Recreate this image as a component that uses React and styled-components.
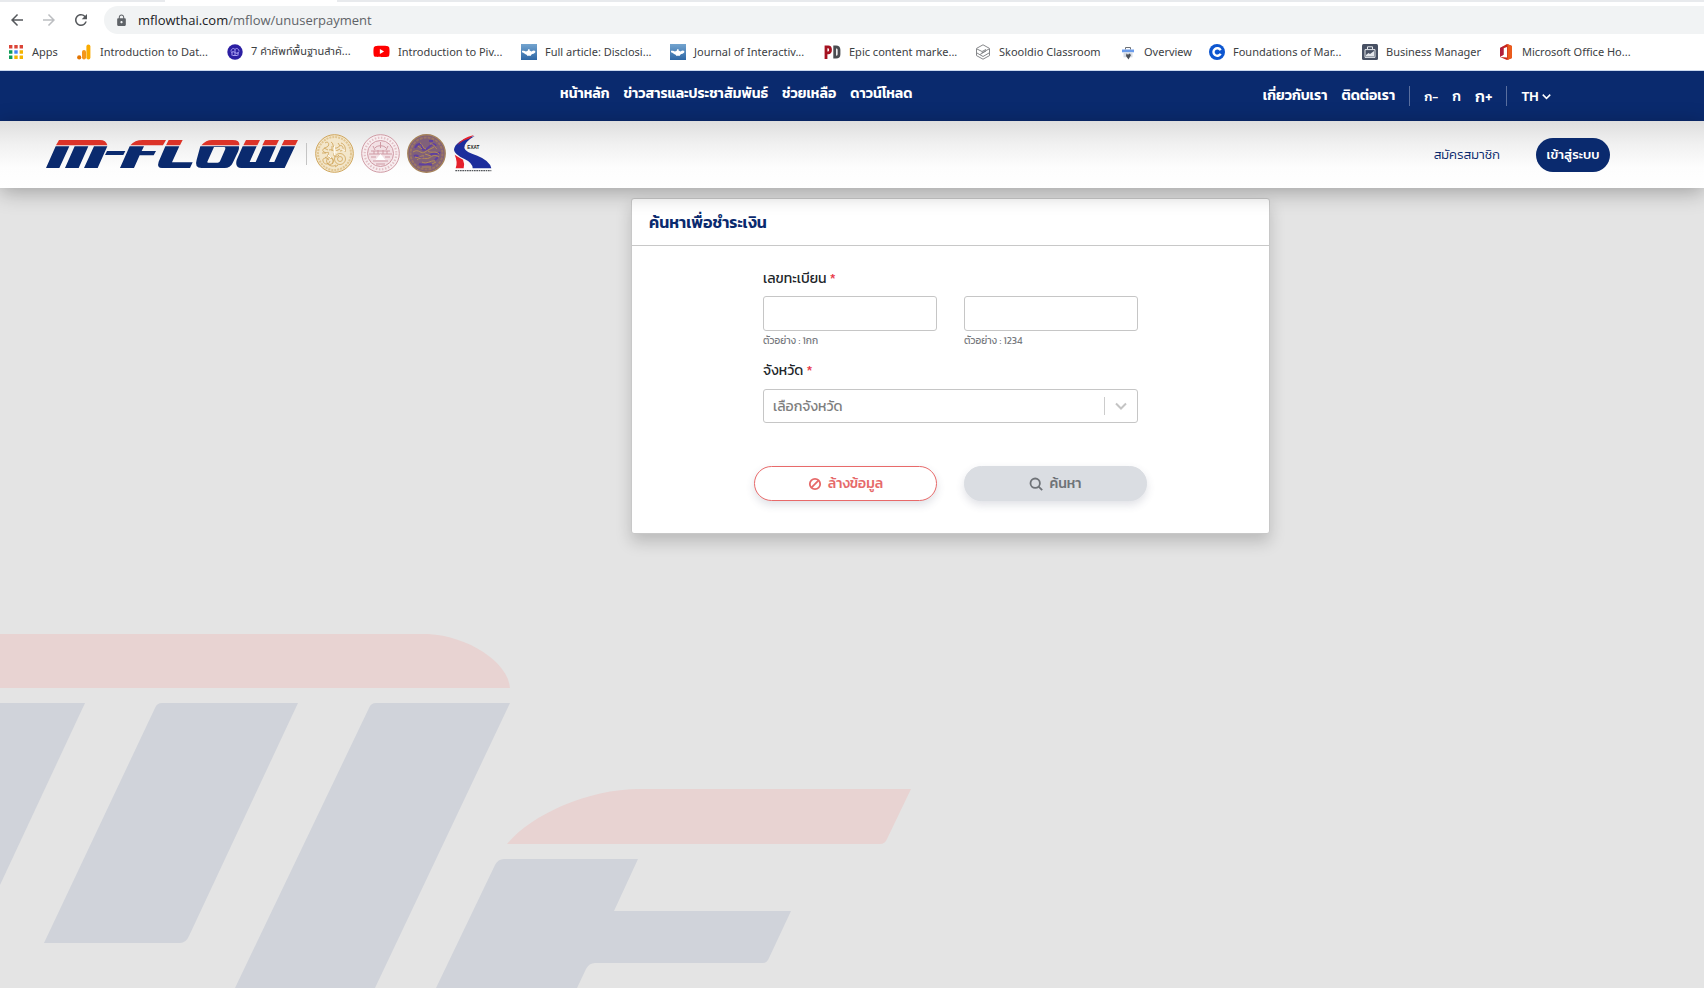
import React from "react"
import styled, { createGlobalStyle } from "styled-components"
import { MdArrowBack, MdArrowForward, MdRefresh, MdLock } from "react-icons/md"
import { FaYoutube } from "react-icons/fa"

const NAVY = "#0a2a6e"

const GlobalStyle = createGlobalStyle`
  * {
    box-sizing: border-box;
  }

  body {
    margin: 0;
    background: #e4e4e4;
    font-family: Kanit, "Noto Sans Thai", "Open Sans", sans-serif;
    color: #212529;
  }

  a {
    color: inherit;
    text-decoration: none;
  }

  button, input, select {
    font-family: inherit;
  }
`

const Page = styled.div`
  display: flex;
  flex-direction: column;
  min-height: 100vh;
`

/* browser bar */

const Chrome = styled.div`
  background: #fff;
  border-bottom: 1px solid #c9d8ee;
  font-family: "Open Sans", "Noto Sans Thai", sans-serif;
`

const TabStrip = styled.div`
  display: flex;
  height: 2px;
  background: #fff;
`

const TabEdge = styled.div`
  width: ${props => props.$width || "auto"};
  flex: ${props => (props.$width ? "none" : 1)};
  margin-right: ${props => (props.$width ? "172px" : 0)};
  background: #e8eaed;
`

const Toolbar = styled.div`
  display: flex;
  align-items: center;
  gap: 14px;
  padding: 4px 0 4px 8px;
`

const ToolButton = styled.button`
  display: flex;
  padding: 0;
  border: 0;
  background: none;
  font-size: 18px;
  color: ${props => (props.disabled ? "#bcbec1" : "#55585c")};
`

const Address = styled.div`
  display: flex;
  flex: 1;
  align-items: center;
  gap: 10px;
  height: 28px;
  padding-left: 11px;
  border-radius: 14px 0 0 14px;
  background: #f1f3f4;
  color: #5f6368;
`

const AddressText = styled.span`
  font-size: 13px;
  line-height: 28px;

  b {
    font-weight: 400;
    color: #202124;
  }
`

const Bookmarks = styled.nav`
  display: flex;
  height: 32px;
  padding-left: 8px;
`

const Bookmark = styled.a`
  display: flex;
  flex: none;
  align-items: center;
  gap: 8px;
  width: ${props => props.$width}px;
  height: 27px;
  font-family: "Noto Sans", "Noto Sans Thai", sans-serif;
  font-size: 11px;
  color: #3c4043;
  white-space: nowrap;

  svg {
    flex: none;
  }
`

/* site header */

const TopBar = styled.div`
  display: flex;
  justify-content: space-between;
  height: 50px;
  padding: 0 9% 0 560px;
  background: ${NAVY};
  color: #fff;
  font-size: 14px;
  font-weight: 600;
  line-height: 20px;
  white-space: nowrap;
`

const Menu = styled.nav`
  display: flex;
  gap: 14px;
  padding-top: 13px;
`

const Tools = styled.div`
  display: flex;
  align-items: center;
  gap: 14px;
`

const Separator = styled.span`
  width: 1px;
  height: ${props => props.$height || 20}px;
  background: ${props => props.$color || "#5a6f9f"};
`

const SizeButton = styled.button`
  padding: 0;
  border: 0;
  background: none;
  color: inherit;
  font-size: ${props => props.$size}px;
  font-weight: 500;
`

const LangButton = styled(SizeButton)`
  display: flex;
  align-items: center;
  gap: 3px;
`

const Header = styled.header`
  position: relative;
  z-index: 1;
  display: flex;
  align-items: center;
  justify-content: space-between;
  height: 67px;
  padding: 0 94px 0 46px;
  background: linear-gradient(#dedede, #f1f1f1 35%, #fdfdfd 70%, #fff);
  box-shadow: 0 4px 20px rgba(0, 0, 0, 0.3);
`

const Brand = styled.a`
  display: flex;
  align-items: center;
  gap: 8px;
  padding-bottom: 2px;
`

const Seals = styled.span`
  display: flex;
  gap: 7px;
`

const Account = styled.div`
  display: flex;
  align-items: center;
  gap: 36px;
  font-size: 13px;
  font-weight: 300;
  color: ${NAVY};
`

const LoginButton = styled.button`
  width: 74px;
  height: 34px;
  padding: 0;
  border: 0;
  border-radius: 17px;
  background: ${NAVY};
  color: #fff;
  font-size: 13px;
  font-weight: 500;
`

/* search form */

const Main = styled.main`
  position: relative;
  display: flex;
  flex: 1;
  align-items: flex-start;
  justify-content: center;
  padding: 10px 0 40px 197px;
  overflow: hidden;
`

const Watermark = styled.svg`
  position: absolute;
  left: 0;
  bottom: 0;
`

const Card = styled.form`
  position: relative;
  flex: 0 1 639px;
  border: 1px solid #c8c8c8;
  border-radius: 3px;
  background: #fff;
  box-shadow: 0 8px 16px rgba(0, 0, 0, 0.18);
`

const CardTitle = styled.h1`
  margin: 0;
  padding: 0 17px;
  border-bottom: 1px solid #c8c8c8;
  color: ${NAVY};
  font-size: 16px;
  font-weight: 600;
  line-height: 46px;
`

const Fields = styled.div`
  display: grid;
  grid-template-columns: 1fr 1fr;
  column-gap: 27px;
  padding: 21px 131px 0;
`

const Label = styled.label`
  grid-column: 1 / -1;
  font-size: 14px;
  line-height: 24px;

  span {
    color: #e8394a;
  }
`

const TextInput = styled.input`
  width: 100%;
  height: 35px;
  margin-top: 5px;
  padding: 0 10px;
  border: 1px solid #c6c6c6;
  border-radius: 3px;
  background: #fff;
  font-size: 14px;
`

const Hint = styled.small`
  height: 28px;
  font-size: 10px;
  line-height: 20px;
  color: #76797e;
`

const SelectBox = styled.div`
  display: grid;
  grid-column: 1 / -1;
  align-items: center;
  height: 34px;
  margin-top: 6px;
  border: 1px solid #c6c6c6;
  border-radius: 3px;

  > * {
    grid-area: 1 / 1;
  }
`

const Select = styled.select`
  width: 100%;
  height: 32px;
  padding: 0 44px 0 9px;
  border: 0;
  background: none;
  appearance: none;
  color: #7d7d7d;
  font-size: 14px;
`

const Indicator = styled.span`
  display: flex;
  align-items: center;
  justify-self: end;
  gap: 10px;
  padding-right: 10px;
  pointer-events: none;
`

const Actions = styled.div`
  display: grid;
  grid-template-columns: 1fr 1fr;
  gap: 27px;
  padding: 43px 122px 32px;
`

const ActionButton = styled.button`
  display: flex;
  align-items: center;
  justify-content: center;
  gap: 6px;
  height: 35px;
  border: 1px solid ${props => (props.$outline ? "#e86a6a" : "#dadde2")};
  border-radius: 18px;
  background: ${props => (props.$outline ? "#fff" : "#dadde2")};
  color: ${props => (props.$outline ? "#e66a6a" : "#6f7378")};
  box-shadow: 0 4px 8px rgba(60, 70, 100, 0.16);
  font-size: 14px;
  font-weight: 500;
`

const Chevron = ({ size, color, width }) => (
  <svg width={size} height={size} viewBox="0 0 12 12" fill="none" stroke={color} strokeWidth={width}>
    <path d="M1 3.5l5 5 5-5" />
  </svg>
)

const icons = {
  apps: (
    <svg width="16" height="16" viewBox="0 0 16 16">
      <path fill="#db4437" d="M1 1h3.4v3.4H1zM6.3 1h3.4v3.4H6.3zM11.6 1H15v3.4h-3.4z" />
      <path fill="#0f9d58" d="M1 6.3h3.4v3.4H1zM1 11.6h3.4V15H1z" />
      <path fill="#4285f4" d="M6.3 6.3h3.4v3.4H6.3z" />
      <path fill="#f4b400" d="M11.6 6.3H15v3.4h-3.4zM6.3 11.6h3.4V15H6.3zM11.6 11.6H15V15h-3.4z" />
    </svg>
  ),
  analytics: (
    <svg width="16" height="16" viewBox="0 0 16 16">
      <rect x="10.4" y="0.5" width="4" height="15" rx="2" fill="#f9ab00" />
      <rect x="6" y="6" width="4" height="9.5" rx="2" fill="#f4971c" />
      <circle cx="3.2" cy="13.4" r="2.1" fill="#e37400" />
    </svg>
  ),
  words: (
    <svg width="16" height="16" viewBox="0 0 16 16">
      <circle cx="8" cy="8" r="7.7" fill="#2c1fa3" />
      <path
        fill="none"
        stroke="#a79df0"
        d="M4 7.5c0-3 3-4 4-2 1-2 4-1 4 2M4 8.5c1-1 3-1 4 0s3 1 4 0M5 8v3.5M8 5.5V12M11 8v3.5M5.5 11.5h5"
      />
    </svg>
  ),
  youtube: <FaYoutube size={17} color="#f00" />,
  lamp: (
    <svg width="16" height="16" viewBox="0 0 16 16">
      <defs>
        <linearGradient id="lamp" x2="0" y2="1">
          <stop stopColor="#73a4cf" />
          <stop offset="1" stopColor="#2e67a5" />
        </linearGradient>
      </defs>
      <path fill="url(#lamp)" d="M0 0h16v16H0z" />
      <path
        fill="#fff"
        d="M1 6.8c2-.4 3 .4 4 .6l2-.8V5.200h1.6v1.400l2 .8c1-.9 3-1.400 3.700-.2.6 1.600-1.300 2.400-3 2.700L10 11v.8H6V11c-2.200-.6-3-2.400-5-2.700z"
      />
    </svg>
  ),
  pd: (
    <svg width="17" height="16" viewBox="0 0 17 16" fill="none" strokeWidth="2.8">
      <path stroke="#a51220" d="M2 15V2.8h2.2q2.3 0 2.3 3t-2.3 3H2" />
      <path stroke="#4a4c50" d="M10.7 2.8v10.4H12q3 0 3-3V5.800q0-3-3-3z" />
    </svg>
  ),
  skooldio: (
    <svg width="16" height="16" viewBox="0 0 16 16" fill="none" stroke="#85878a">
      <path d="M8 .8l6.500 3.600v7.200L8 15.200l-6.500-3.600V4.400z" />
      <path d="M2 9l6 3.500L14 9M5 10.500l6-3.500M6.500 9L14 5M2 5l5 2.500L11 5.500" />
    </svg>
  ),
  overview: (
    <svg width="16" height="16" viewBox="0 0 16 16">
      <path fill="none" stroke="#6c7075" d="M5.5 5.5v-2h5v2" />
      <path fill="#6a9bea" d="M2 5.500h12v2.800H2z" />
      <path fill="#d5dbe4" d="M3.500 8.300h9v5h-9z" />
      <path fill="#4c5158" d="M6.500 9.500l1.500 1.200 1.500-1.200 1.500 1.500-2.500 4.500L6 12z" />
    </svg>
  ),
  coursera: (
    <svg width="16" height="16" viewBox="0 0 16 16">
      <circle cx="8" cy="8" r="8" fill="#0d56d0" />
      <path fill="none" stroke="#fff" strokeWidth="2.4" d="M11.6 6.2A3.8 3.8 0 1 0 11.6 9.8" />
    </svg>
  ),
  business: (
    <svg width="16" height="16" viewBox="0 0 16 16">
      <rect width="16" height="16" rx="1.5" fill="#475063" />
      <path fill="none" stroke="#e4e7ec" d="M5.5 5V2.800h5V5M3 5.600h10v7.800H3z" />
      <path fill="#e4e7ec" d="M4 12.500V11l2.500-2 1.500 1 4-3v5.500z" />
    </svg>
  ),
  office: (
    <svg width="16" height="16" viewBox="0 0 16 16">
      <path fill="#c8261c" d="M2 4l7-4 5 2v12l-5 2-7-3 7 .6V3L5.500 4.200v6.600L2 12.800z" />
      <path fill="#ea5b1c" d="M9.500 0L14 2v12l-4.500 2z" />
      <path fill="#b01e3c" d="M2 4l3.500-1.700v8.500L2 12.800z" />
    </svg>
  ),
}

const bookmarks = [
  { icon: "apps", text: "Apps", width: 68 },
  { icon: "analytics", text: "Introduction to Dat...", width: 151 },
  { icon: "words", text: "7 คำศัพท์พื้นฐานสำคั...", width: 146 },
  { icon: "youtube", text: "Introduction to Piv...", width: 148 },
  { icon: "lamp", text: "Full article: Disclosi...", width: 149 },
  { icon: "lamp", text: "Journal of Interactiv...", width: 154 },
  { icon: "pd", text: "Epic content marke...", width: 151 },
  { icon: "skooldio", text: "Skooldio Classroom", width: 145 },
  { icon: "overview", text: "Overview", width: 89 },
  { icon: "coursera", text: "Foundations of Mar...", width: 153 },
  { icon: "business", text: "Business Manager", width: 136 },
  { icon: "office", text: "Microsoft Office Ho...", width: 140 },
]

const MFlowLogo = () => (
  <svg width="252" height="28" viewBox="18 45 756 84" role="img" aria-label="M-Flow">
    <g fill="#dc3328">
      <path d="M57 45H180Q198 45 202 61H48z" />
      <path d="M271 61Q284 45 308 45H378L369 61z" />
      <path d="M386 45H428L420 61H378z" />
      <path d="M484 61Q498 45 516 45H578Q600 45 598 61z" />
      <path d="M618 45H660L652 61H610zM675 45H717L709 61H667zM733 45H774L766 61H725z" />
    </g>
    <g fill={NAVY}>
      <path d="M47 64H88L58 129H18zM104 64H145L116 129H75zM162 64H202L173 129H132z" />
      <path d="M201 78H256L250 90H195z" />
      <path d="M269 64H312L305 78H348L341 91H299L282 129H240z" />
      <path d="M376 64H418L396 112H458L450 129H366Q350 129 356 110z" />
      <path
        fillRule="evenodd"
        d="M481 64H597Q598 72 594 80L578 114Q571 129 554 129H485Q462 129 470 104zM522 66L502 110Q501 113 505 113H533Q538 113 540 109L556 72Q557 66 553 66z"
      />
      <path d="M608 64H650L629 111H647L668 64H708L687 111H703L724 64H765L734 129H604Q584 129 590 105z" />
    </g>
  </svg>
)

const GoldSeal = () => (
  <svg width="39" height="39" viewBox="0 0 39 39" fill="none" stroke="#cfa55a">
    <circle cx="19.5" cy="19.5" r="18.8" fill="#f3e6ca" />
    <circle cx="19.5" cy="19.5" r="16.5" strokeWidth="2" strokeDasharray="2 1" opacity=".5" />
    <path
      opacity=".85"
      d="M10 9c4-3 5 3 2 4s-6 3-3 5 6-2 4 3-6 2-5 6 6 4 7 0M16 8c3 1 1 5 4 6s5-4 7-2 1 5-2 5M14 16c3-1 6 1 5 4s3 4 5 1M15 24c3 0 4 3 2 6M26 9c4 1 5 6 4 9M12 29c2 3 6 4 9 2M17 12v7M9 14l4 2M7 19h4M23 9l2 3M21 17l4-2M20 33l3-2M10 23l4 3"
    />
    <circle cx="25" cy="25" r="5.5" opacity=".8" />
    <circle cx="25" cy="25" r="2.5" opacity=".8" />
    <circle cx="15" cy="27" r="3.5" opacity=".8" />
    <path stroke="#fffaf0" d="M19.5 12v9M16 18h6M13 21l3 3M27 15l3 2" />
  </svg>
)

const RoseSeal = () => (
  <svg width="39" height="39" viewBox="0 0 39 39" fill="none" stroke="#cf9aa4">
    <circle cx="19.5" cy="19.5" r="18.8" fill="#f8eef0" />
    <circle cx="19.5" cy="19.5" r="15.8" strokeWidth="2.2" strokeDasharray="1.5 1.6" opacity=".55" />
    <circle cx="19.5" cy="19.5" r="13" fill="#f2e0e4" />
    <path d="M19.5 8v6M12 12l2 4M27 12l-2 4M10 17h19M8 20h23M10 23h5M24 23h5M14 14c2-3 9-3 11 0M13 17v3M17 16v4M22 16v4M26 17v3M12 27h15M15 30h9" />
    <path fill="#fff" stroke="none" d="M19.5 20l5 6h-10z" />
  </svg>
)

const PurpleSeal = () => (
  <svg width="39" height="39" viewBox="0 0 39 39" fill="none">
    <circle cx="19.5" cy="19.5" r="18.7" fill="#80607a" stroke="#a5825a" strokeWidth="1.4" />
    <circle cx="19.5" cy="19.5" r="16" stroke="#9c7664" strokeWidth="2" strokeDasharray="3 1" />
    <path
      stroke="#5f40a0"
      strokeWidth="2"
      d="M8 14c3-6 8-4 7-1s3 4 6 1 6-6 8-2M7 22c4-2 5 3 9 2M23 21c4-3 8 1 10-3M12 30c4 2 8-2 13 1M28 26l3-3M22 7h4"
    />
    <path
      stroke="#b58d55"
      d="M6 18c6-4 8 3 12 0s6-3 9-5M10 26c4-4 8 0 12-2s5-4 10-1M13 9c3 1 2 5 6 6M23 10c4-1 5 4 7 5M15 28c5 3 8-2 13-1M8 23c3 2 6-2 9-1M21 17c4 3 7-1 11 3M15 33h9M11 12l4 3M18 20l6 2M25 30l4-2"
    />
  </svg>
)

const ExatLogo = () => (
  <svg width="40" height="39" viewBox="-3 0 120 117">
    <path fill="#1c2d9c" d="M62 6Q2 20 0 48Q2 62 30 74Q56 86 56 103H112Q108 80 70 65Q34 54 31 42Q30 24 62 6z" />
    <path fill="#e5202b" d="M60 3Q22 12 10 34Q26 18 44 15zM2 62Q14 70 27 77Q33 90 29 103H5Q12 84 2 62z" />
    <text x="40" y="44" fontSize="14" fontWeight="700" fontFamily="Liberation Sans" fill="#222">EXAT</text>
    <path stroke="#55585c" strokeWidth="4" strokeDasharray="5 2" d="M4 110H112" />
  </svg>
)

const BackgroundMark = () => (
  <Watermark width="940" height="368" viewBox="0 0 940 368" aria-hidden="true">
    <g fill="#e8d3d2">
      <path d="M0 14H428C468 16 508 42 510 68H0z" />
      <path d="M507 224C530 196 586 169 640 169H911L887 219Q885 224 880 224z" />
    </g>
    <g fill="#d0d3da">
      <path d="M0 83H85L0 265z" />
      <path d="M162 83H298L189 316Q186 323 180 323H44L155 88Q157 83 162 83z" />
      <path d="M376 83H510L375 368H235L369 88Q371 83 376 83z" />
      <path d="M504 239H638L614 291H791L769 338Q767 343 763 343H595Q589 343 586 349L577 368H436L495 245Q498 239 504 239z" />
    </g>
  </Watermark>
)

const BrowserBar = () => (
  <Chrome>
    <TabStrip>
      <TabEdge $width="165px" />
      <TabEdge />
    </TabStrip>
    <Toolbar>
      <ToolButton aria-label="Back"><MdArrowBack /></ToolButton>
      <ToolButton aria-label="Forward" disabled><MdArrowForward /></ToolButton>
      <ToolButton aria-label="Reload"><MdRefresh /></ToolButton>
      <Address>
        <MdLock size={13} />
        <AddressText><b>mflowthai.com</b>/mflow/unuserpayment</AddressText>
      </Address>
    </Toolbar>
    <Bookmarks aria-label="Bookmarks">
      {bookmarks.map(item => (
        <Bookmark href="#" key={item.text} $width={item.width}>
          {icons[item.icon]}
          {item.text}
        </Bookmark>
      ))}
    </Bookmarks>
  </Chrome>
)

const SiteHeader = () => (
  <>
    <TopBar>
      <Menu>
        <a href="#">หน้าหลัก</a>
        <a href="#">ข่าวสารและประชาสัมพันธ์</a>
        <a href="#">ช่วยเหลือ</a>
        <a href="#">ดาวน์โหลด</a>
      </Menu>
      <Tools>
        <a href="#">เกี่ยวกับเรา</a>
        <a href="#">ติดต่อเรา</a>
        <Separator />
        <SizeButton $size={13}>ก-</SizeButton>
        <SizeButton $size={14}>ก</SizeButton>
        <SizeButton $size={16}>ก+</SizeButton>
        <Separator />
        <LangButton $size={14}>TH <Chevron size={9} color="#fff" width={2} /></LangButton>
      </Tools>
    </TopBar>
    <Header>
      <Brand href="#">
        <MFlowLogo />
        <Separator $height={22} $color="#c4c4c4" />
        <Seals>
          <GoldSeal />
          <RoseSeal />
          <PurpleSeal />
          <ExatLogo />
        </Seals>
      </Brand>
      <Account>
        <a href="#">สมัครสมาชิก</a>
        <LoginButton>เข้าสู่ระบบ</LoginButton>
      </Account>
    </Header>
  </>
)

const SearchForm = () => (
  <Card onSubmit={e => e.preventDefault()}>
    <CardTitle>ค้นหาเพื่อชำระเงิน</CardTitle>
    <Fields>
      <Label htmlFor="plate">เลขทะเบียน <span>*</span></Label>
      <TextInput id="plate" aria-describedby="plate-hint" />
      <TextInput id="plate-number" aria-label="เลขทะเบียน" aria-describedby="number-hint" />
      <Hint id="plate-hint">ตัวอย่าง : 1กก</Hint>
      <Hint id="number-hint">ตัวอย่าง : 1234</Hint>
      <Label htmlFor="province">จังหวัด <span>*</span></Label>
      <SelectBox>
        <Select id="province" defaultValue="">
          <option value="">เลือกจังหวัด</option>
        </Select>
        <Indicator>
          <Separator $height={18} $color="#ccc" />
          <Chevron size={12} color="#c4c4c4" width={2} />
        </Indicator>
      </SelectBox>
    </Fields>
    <Actions>
      <ActionButton type="reset" $outline>
        <svg width="14" height="14" viewBox="0 0 14 14" fill="none" stroke="currentColor" strokeWidth="1.8">
          <circle cx="7" cy="7" r="5.2" />
          <path d="M3.2 10.8l7.600-7.600" />
        </svg>
        ล้างข้อมูล
      </ActionButton>
      <ActionButton type="submit">
        <svg width="14" height="14" viewBox="0 0 14 14" fill="none" stroke="currentColor" strokeWidth="1.8">
          <circle cx="6.2" cy="6.2" r="4.7" />
          <path d="M9.6 9.6l3.600 3.600" />
        </svg>
        ค้นหา
      </ActionButton>
    </Actions>
  </Card>
)

const App = () => (
  <Page>
    <GlobalStyle />
    <BrowserBar />
    <SiteHeader />
    <Main>
      <BackgroundMark />
      <SearchForm />
    </Main>
  </Page>
)

export default App
